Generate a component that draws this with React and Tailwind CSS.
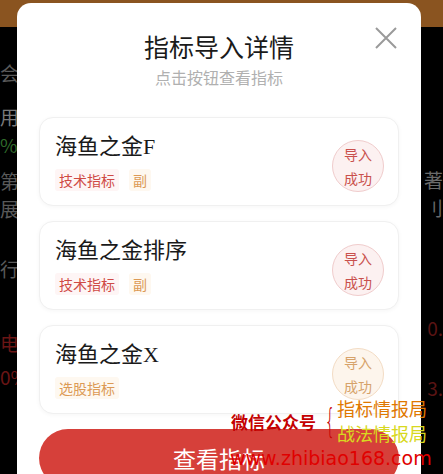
import React from "react";

const cjk = { fontFamily: '"Noto Sans CJK SC", "Noto Sans", sans-serif' };
const nameFont = { fontFamily: '"Liberation Serif", "Noto Sans CJK SC", serif' };

function Stamp({ tone }) {
  const cls =
    tone === "orange"
      ? "border-[#f3dcc4] bg-[#fdf5ec] text-[#d6a26a]"
      : "border-[#f0cccc] bg-[#fcf1f1] text-[#c9504c]";
  return (
    <div
      className={`mt-[9px] flex h-[52px] w-[52px] shrink-0 flex-col items-center justify-center rounded-full border text-[14px] leading-[24px] ${cls}`}
    >
      <span>导入</span>
      <span>成功</span>
    </div>
  );
}

function Card({ name, tags, tone }) {
  return (
    <div className="flex h-[89px] items-center justify-between rounded-[14px] border border-[#f0f0f0] bg-white pl-[15px] pr-[14px] shadow-[0_1px_4px_rgba(0,0,0,0.04)]">
      <div className="flex flex-col">
        <div className="text-[22px] leading-[30px] text-[#1a1a1a]" style={nameFont}>
          {name}
        </div>
        <div className="mt-[7px] flex gap-[10px]">
          {tags.map((t) => (
            <span
              key={t.label}
              className={`rounded-[3px] px-[4px] text-[14px] leading-[22px] ${
                t.c === "red" ? "bg-[#fef5f5] text-[#cf4a45]" : "bg-[#fef8f0] text-[#dc9a55]"
              }`}
            >
              {t.label}
            </span>
          ))}
        </div>
      </div>
      <Stamp tone={tone} />
    </div>
  );
}

export default function App() {
  return (
    <div className="relative h-[474px] w-[443px] overflow-hidden bg-black" style={cjk}>
      {/* background page */}
      <div className="h-[27px] bg-[#8a5420]" />
      <div className="flex">
        <div className="flex w-[17px] flex-col overflow-hidden whitespace-nowrap text-[19px] leading-[26px]">
          <span className="mt-[33px] text-[#5a5a5a]">会计</span>
          <span className="mt-[18px] text-[#7a7a7a]">用</span>
          <span className="mt-[2px] text-[#2f6a2a]">%</span>
          <span className="mt-[10px] text-[#5a5a5a]">第五</span>
          <span className="mt-[2px] text-[#5a5a5a]">展</span>
          <span className="mt-[34px] text-[#5a5a5a]">行业</span>
          <span className="mt-[48px] text-[#6a1515]">电</span>
          <span className="mt-[8px] text-[#6a1515]">0%</span>
        </div>
      </div>
      <div className="absolute right-0 top-[27px] flex w-[22px] flex-col items-end overflow-hidden whitespace-nowrap text-[19px] leading-[26px]">
        <span className="mt-[140px] text-[#6a6a6a]">著</span>
        <span className="mt-[2px] text-[#6a6a6a]">刂</span>
        <span className="mt-[94px] text-[#5a1414]">0.</span>
        <span className="mt-[34px] text-[#5a1414]">3.</span>
      </div>

      {/* modal */}
      <div className="absolute left-[17px] top-[3px] h-[500px] w-[404px] rounded-[14px] bg-white px-[22px] pt-[27px]">
        <button className="absolute right-[24px] top-[24px] flex h-[22px] w-[22px] items-center justify-center">
          <svg width="22" height="22" viewBox="0 0 22 22">
            <path d="M1 1 L21 21 M21 1 L1 21" stroke="#9a9a9a" strokeWidth="2" fill="none" />
          </svg>
        </button>
        <div className="text-center text-[25px] leading-[32px] text-[#1a1a1a]">指标导入详情</div>
        <div className="mt-[4px] text-center text-[16px] leading-[22px] text-[#b0b0b0]">点击按钮查看指标</div>
        <div className="mt-[29px] flex flex-col gap-[15px]">
          <Card
            name="海鱼之金F"
            tone="red"
            tags={[
              { label: "技术指标", c: "red" },
              { label: "副", c: "orange" },
            ]}
          />
          <Card
            name="海鱼之金排序"
            tone="red"
            tags={[
              { label: "技术指标", c: "red" },
              { label: "副", c: "orange" },
            ]}
          />
          <Card name="海鱼之金X" tone="orange" tags={[{ label: "选股指标", c: "orange" }]} />
        </div>
        <button className="mt-[15px] flex h-[58px] w-full items-center justify-center rounded-full bg-[#d6403a] text-[23px] text-white">
          查看指标
        </button>
      </div>

      {/* watermark */}
      <div className="pointer-events-none absolute left-[231px] top-[396px] flex items-center">
        <span className="text-[17px] font-bold leading-none text-[#c40000]">微信公众号</span>
        <span className="ml-[10px] flex w-[8px] justify-center overflow-visible">
          <span
            className="text-[34px] font-light leading-none text-[#c40000]"
            style={{ fontFamily: '"DejaVu Sans", sans-serif', transform: "scaleX(0.5)" }}
          >
            {"{"}
          </span>
        </span>
        <div className="ml-[3px] flex flex-col text-[18px] leading-[25px]">
          <span className="text-[#e07800]">指标情报局</span>
          <span className="text-[#d8d820]">战法情报局</span>
        </div>
      </div>
      <div
        className="pointer-events-none absolute left-[230px] top-[445px] text-[19px] leading-[26px] text-[#e00000]"
        style={{ fontFamily: '"DejaVu Sans", sans-serif' }}
      >
        www.zhibiao168.com
      </div>
    </div>
  );
}
